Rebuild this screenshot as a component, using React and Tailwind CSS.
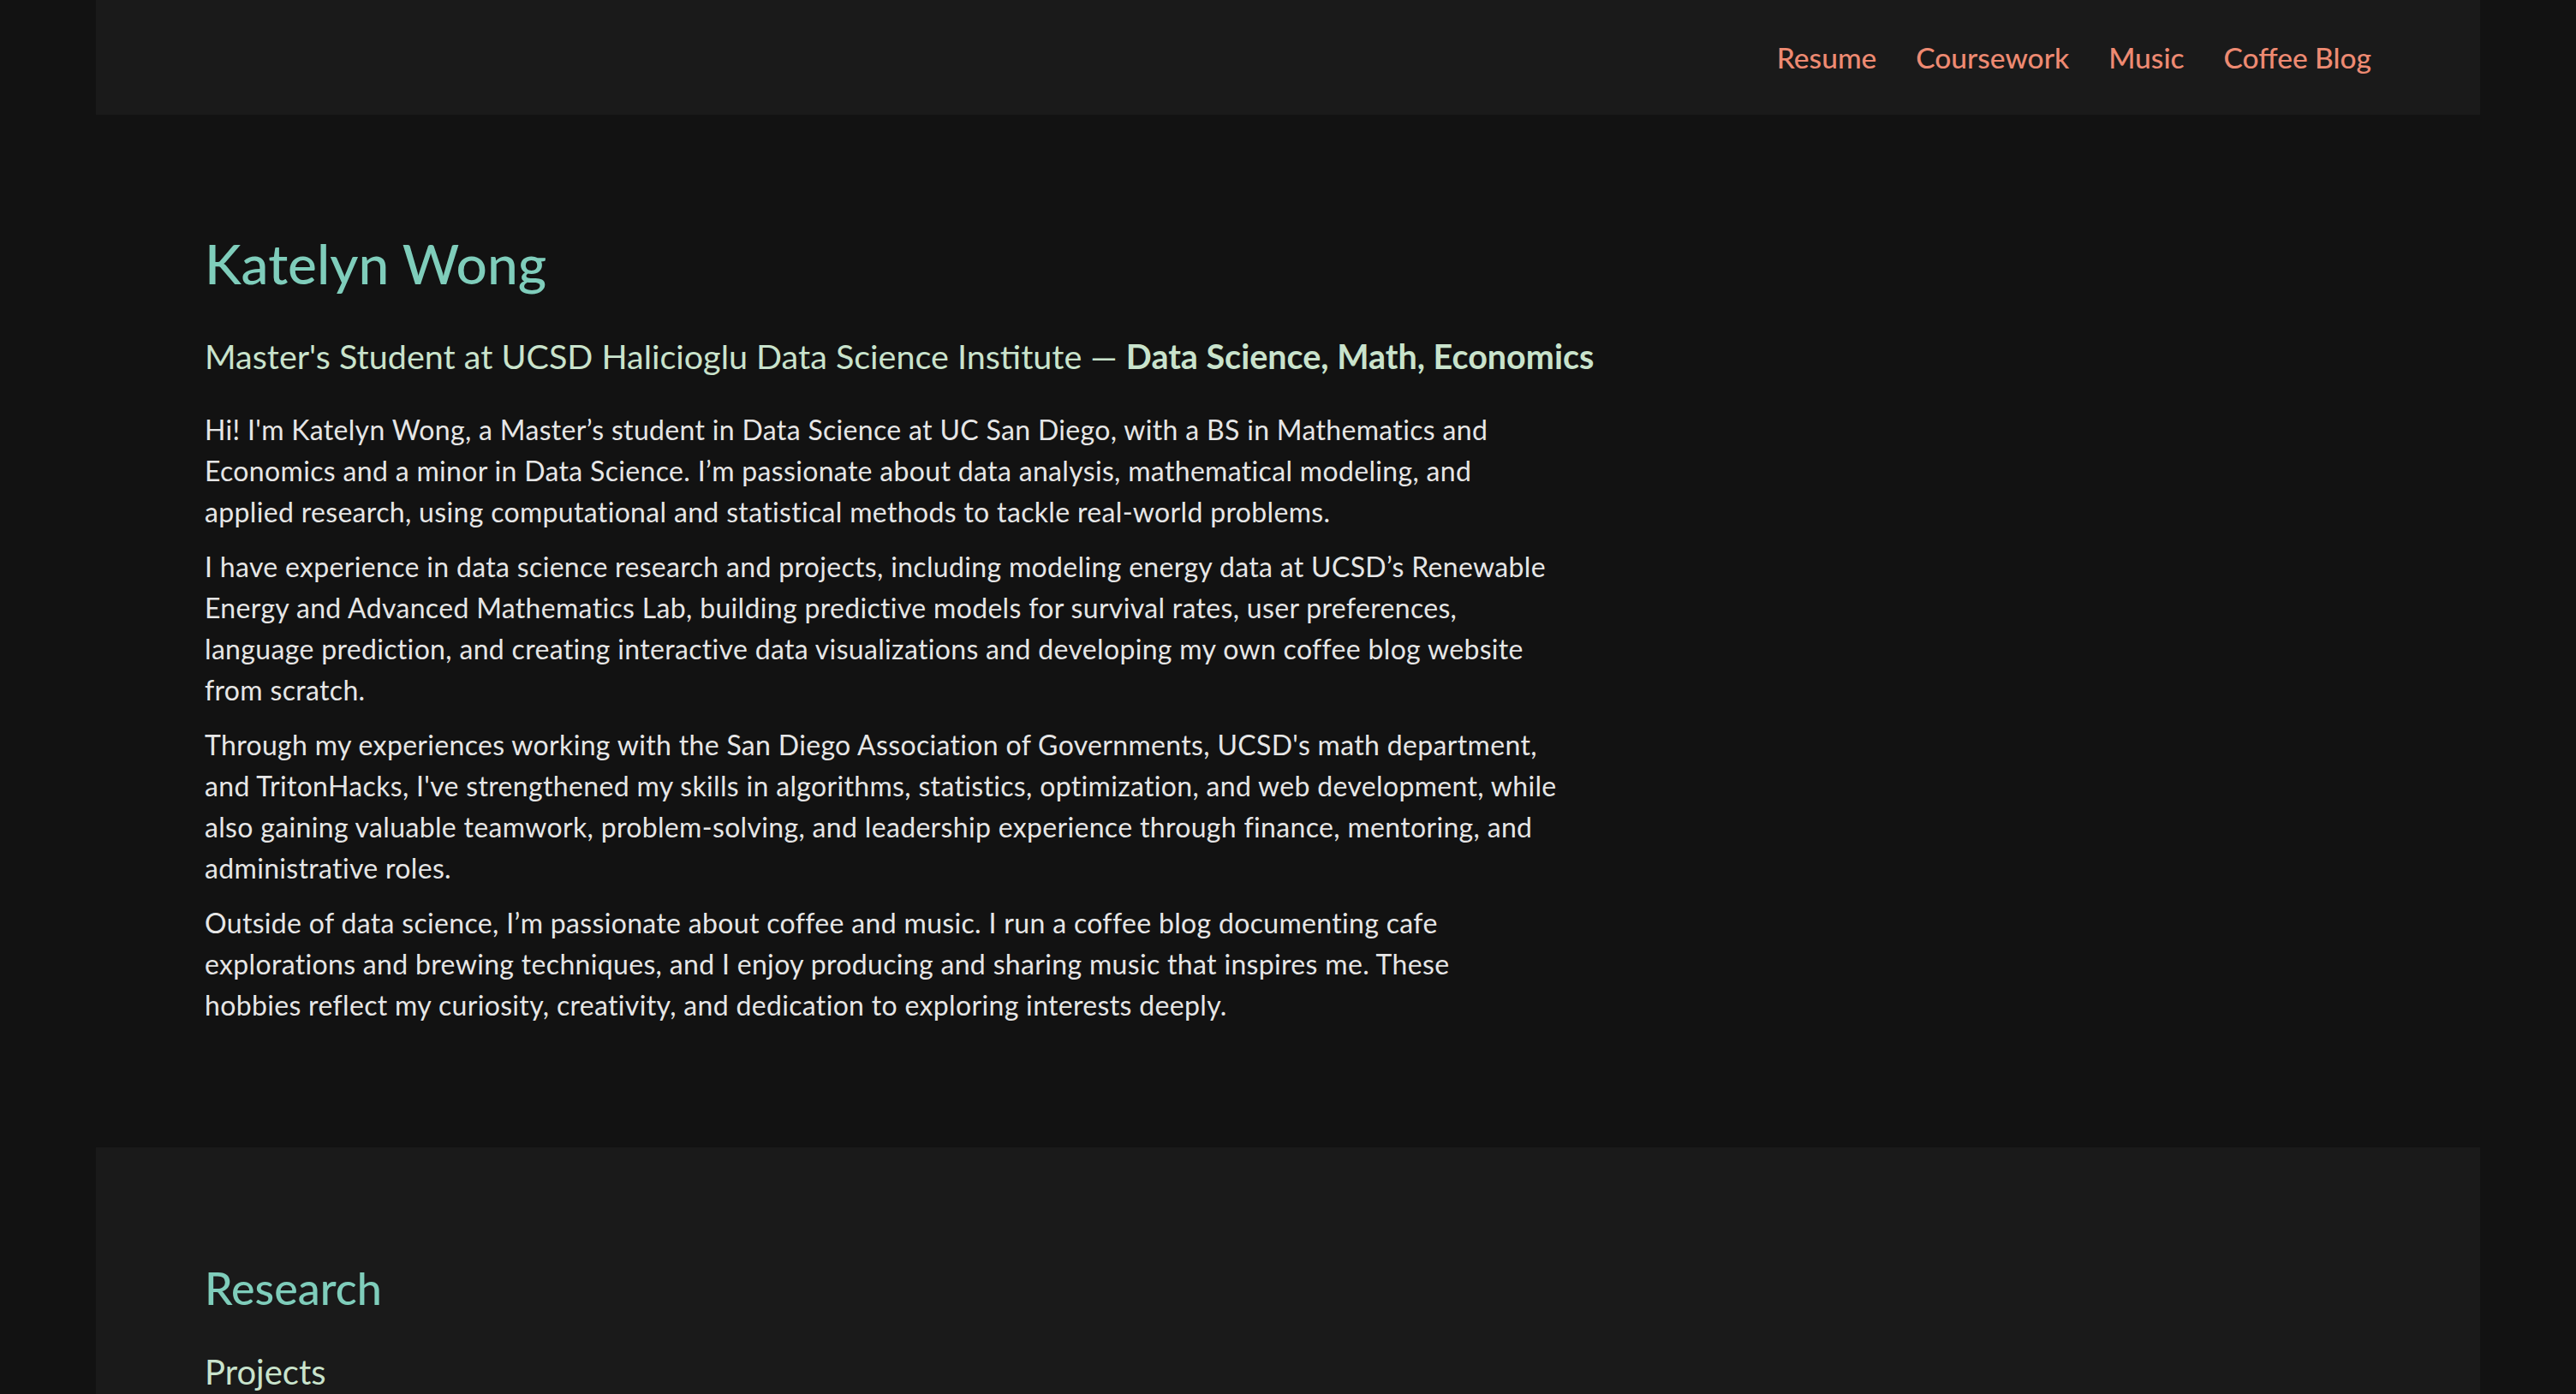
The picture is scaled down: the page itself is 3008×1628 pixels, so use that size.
import React from "react";

const links = ["Resume", "Coursework", "Music", "Coffee Blog"];

// lines kept as in the original layout
const paragraphs = [
  [
    "Hi! I'm Katelyn Wong, a Master’s student in Data Science at UC San Diego, with a BS in Mathematics and",
    "Economics and a minor in Data Science. I’m passionate about data analysis, mathematical modeling, and",
    "applied research, using computational and statistical methods to tackle real-world problems.",
  ],
  [
    "I have experience in data science research and projects, including modeling energy data at UCSD’s Renewable",
    "Energy and Advanced Mathematics Lab, building predictive models for survival rates, user preferences,",
    "language prediction, and creating interactive data visualizations and developing my own coffee blog website",
    "from scratch.",
  ],
  [
    "Through my experiences working with the San Diego Association of Governments, UCSD's math department,",
    "and TritonHacks, I've strengthened my skills in algorithms, statistics, optimization, and web development, while",
    "also gaining valuable teamwork, problem-solving, and leadership experience through finance, mentoring, and",
    "administrative roles.",
  ],
  [
    "Outside of data science, I’m passionate about coffee and music. I run a coffee blog documenting cafe",
    "explorations and brewing techniques, and I enjoy producing and sharing music that inspires me. These",
    "hobbies reflect my curiosity, creativity, and dedication to exploring interests deeply.",
  ],
];

export default function App() {
  return (
    <div className="min-h-screen bg-[#121212] font-['Lato','Noto_Sans',sans-serif] text-[#e6e6e6]">
      {/* top nav */}
      <header className="mx-auto flex h-[134px] w-[2784px] items-center justify-end gap-[46px] bg-[#1a1a1a] pr-[127px]">
        {links.map((l) => (
          <a key={l} href="#" className="text-[33.5px] font-medium text-[#ee8a72]">
            {l}
          </a>
        ))}
      </header>

      {/* intro */}
      <main className="mx-auto w-[2784px] px-[127px] pt-[136px] pb-[142px]">
        <h1 className="text-[64px] leading-[76px] font-medium text-[#7fcdbb]">Katelyn Wong</h1>
        <p className="mt-[45px] whitespace-nowrap text-[39.5px] leading-[50px] text-[#c9e3cc]">
          Master's Student at UCSD Halicioglu Data Science Institute —{" "}
          <span className="font-bold">Data Science, Math, Economics</span>
        </p>
        <div className="mt-[37px] flex flex-col gap-[16px]">
          {paragraphs.map((lines, i) => (
            <p key={i} className="whitespace-nowrap text-[32px] leading-[48px] tracking-[0.33px]">
              {lines.map((line) => (
                <span key={line} className="block">
                  {line}
                </span>
              ))}
            </p>
          ))}
        </div>
      </main>

      {/* research */}
      <section className="mx-auto min-h-[400px] w-[2784px] bg-[#1a1a1a] px-[127px] pt-[134px]">
        <h2 className="text-[52px] leading-[60px] font-medium text-[#7fcdbb]">Research</h2>
        <h3 className="mt-[44px] text-[40px] leading-[48px] text-[#c9e3cc]">Projects</h3>
      </section>
    </div>
  );
}
